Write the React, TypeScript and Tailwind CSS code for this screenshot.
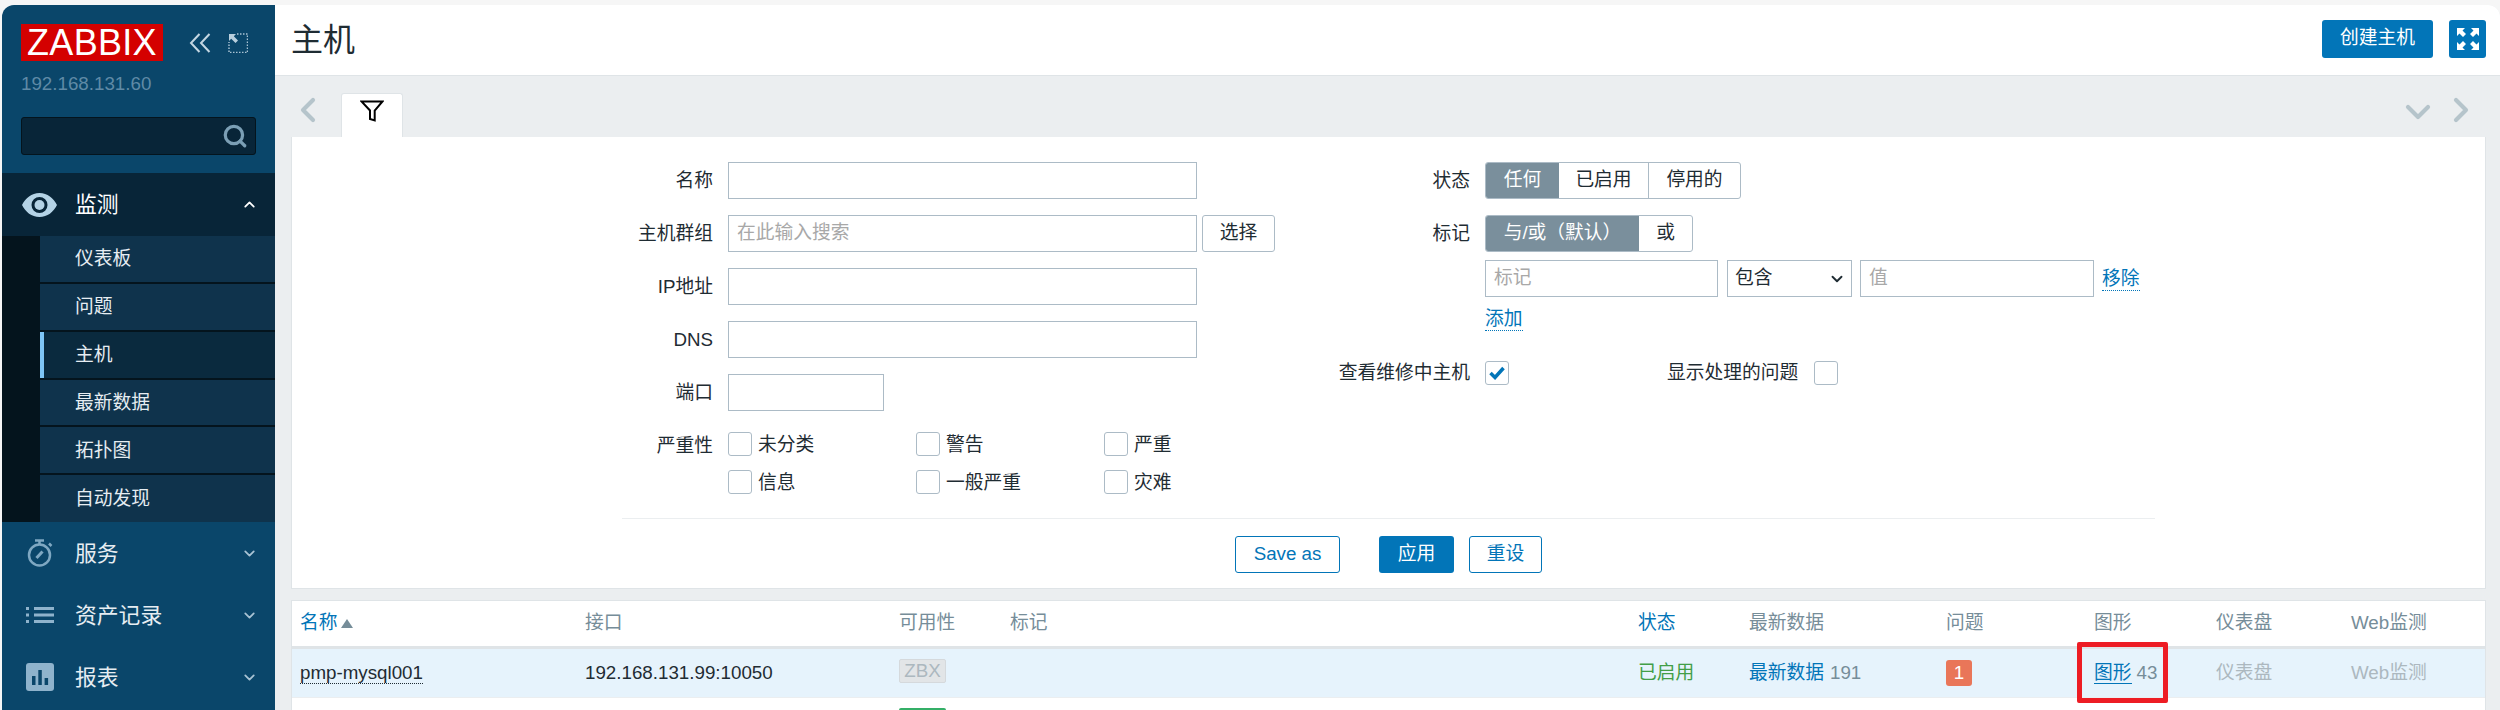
import React from 'react';
import { ChevronDown, ChevronLeft, ChevronRight, ChevronUp, Search } from 'lucide-react';

const subItems = ['仪表板', '问题', '主机', '最新数据', '拓扑图', '自动发现'];

const EyeIcon = () => (
  <svg width="35" height="24" viewBox="0 0 35 24" className="shrink-0">
    <path fill="#b4d3e6" fillRule="evenodd" d="M17.5 0C9.5 0 3.5 5 0 12c3.500 7 9.500 12 17.500 12S31.500 19 35 12C31.500 5 25.500 0 17.500 0zm0 4a8 8 0 1 1 0 16 8 8 0 0 1 0-16z" />
    <circle cx="17.500" cy="12" r="5" fill="#b4d3e6" />
  </svg>
);

const TimerIcon = () => (
  <svg width="26" height="28" viewBox="0 0 26 28" fill="none" stroke="#7fa8c2" strokeWidth="2.500">
    <circle cx="12.500" cy="16" r="10.500" />
    <path d="M8 1.500h9M12.500 2v3M22 4.500l2.500 2.500" />
    <path d="M9.500 19l6-6.500" strokeWidth="3" />
  </svg>
);

const ListIcon = () => (
  <svg width="28" height="16" viewBox="0 0 28 16" fill="#8fb3cc">
    <rect x="0" y="0" width="3" height="3" />
    <rect x="0" y="6.500" width="3" height="3" />
    <rect x="0" y="13" width="3" height="3" />
    <rect x="8" y="0" width="20" height="3" />
    <rect x="8" y="6.500" width="20" height="3" />
    <rect x="8" y="13" width="20" height="3" />
  </svg>
);

const ReportIcon = () => (
  <svg width="28" height="28" viewBox="0 0 28 28">
    <rect width="28" height="28" rx="3" fill="#8fb3cc" />
    <rect x="6" y="13" width="3.500" height="9" fill="#0a466a" />
    <rect x="12.300" y="7" width="3.500" height="15" fill="#0a466a" />
    <rect x="18.600" y="15" width="3.500" height="7" fill="#0a466a" />
  </svg>
);

const CollapseIcon = () => (
  <svg width="22" height="20" viewBox="0 0 22 20" fill="none" stroke="#c3d6e2" strokeWidth="2" className="shrink-0">
    <path d="M10.500 1L2 10l8.500 9M20.500 1L12 10l8.500 9" />
  </svg>
);

const ExpandSidebarIcon = () => (
  <svg width="20" height="20" viewBox="0 0 20 20" fill="none" className="shrink-0">
    <path d="M9 1h10.500v18.500H1V9" stroke="#a9c3d4" strokeWidth="1.500" strokeDasharray="1.500 1.500" />
    <path d="M1 1h7L5.800 3.200 10 7.500 7.500 10 3.200 5.800 1 8z" fill="#b8cfdd" />
  </svg>
);

const FilterIcon = () => (
  <svg width="24" height="22" viewBox="0 0 24 22" fill="none" stroke="#000" strokeWidth="2">
    <path d="M1.500 1.500h21l-7.800 9v10l-4.700-1.500v-8.500z" />
  </svg>
);

const FullscreenIcon = () => (
  <svg width="22" height="22" viewBox="0 0 22 22" fill="#ffffff">
    <path d="M0 0h8L5.500 2.500 9 6 6 9 2.500 5.500 0 8zM22 0v8l-2.500-2.500L16 9l-3-3 3.500-3.500L14 0zM0 22v-8l2.500 2.500L6 13l3 3-3.500 3.500L8 22zM22 22h-8l2.500-2.500L13 16l3-3 3.500 3.500L22 14z" />
  </svg>
);

const Checkbox = ({ checked = false }: { checked?: boolean }) => (
  <span className="flex h-6 w-6 shrink-0 items-center justify-center rounded-[3px] border border-[#acbbc6] bg-white">
    {checked && (
      <svg width="16" height="14" viewBox="0 0 16 14" fill="none" stroke="#0275b8" strokeWidth="3.500">
        <path d="M1.500 7l4.500 4.500L14.500 2" />
      </svg>
    )}
  </span>
);

const FormRow = ({ label, children, className = '' }: { label: string; children: React.ReactNode; className?: string }) => (
  <div className={`flex items-center ${className}`}>
    <div className="w-[120px] shrink-0 pt-[2px] text-right">{label}</div>
    <div className="ml-[15px] flex items-center">{children}</div>
  </div>
);

const TextBox = ({ width, placeholder }: { width: string; placeholder?: string }) => (
  <div className={`${width} flex h-[37px] items-center border border-[#acbbc6] bg-white px-[8px] text-[#a8a8a8]`}>{placeholder}</div>
);

const SeverityItem = ({ label }: { label: string }) => (
  <div className="flex h-[24px] w-[188px] items-center gap-[6px]">
    <Checkbox />
    <span className="pt-[2px]">{label}</span>
  </div>
);

const NavRow = ({ icon, label }: { icon: React.ReactNode; label: string }) => (
  <div className="flex h-[62px] items-center text-[21.800px] text-[#e6edf2]">
    <div className="flex w-[73px] shrink-0 justify-center pl-[3px]">{icon}</div>
    <span className="flex-1 pt-[2px]">{label}</span>
    <ChevronDown size={17} strokeWidth={2.500} className="mr-[17px] text-[#a9c3d4]" />
  </div>
);

const tableCols = 'grid grid-cols-[285px_314px_111px_628px_111px_197px_148px_122px_135px_1fr] pl-[8px]';

export default function App() {
  return (
    <div className="h-[710px] w-[2500px] overflow-hidden bg-[#f6f6f6] pl-[2px] pt-[5px] font-['Liberation_Sans','Noto_Sans_CJK_SC',sans-serif] text-[18.750px] text-[#1f2c33]">
      <div className="flex h-[705px] overflow-hidden rounded-t-[12px]">
        {/* sidebar */}
        <aside className="flex w-[273px] shrink-0 flex-col bg-[#0a466a]">
          <div className="flex h-[112px] flex-col px-[19px] pt-[19px]">
            <div className="flex items-center">
              <div className="flex h-[37px] w-[142px] items-center justify-center bg-[#d40000] text-[36px] leading-none tracking-[0.3px] text-white">ZABBIX</div>
              <div className="ml-[26px]"><CollapseIcon /></div>
              <div className="ml-[17px]"><ExpandSidebarIcon /></div>
            </div>
            <div className="mt-[9px] text-[#5f8aa6]">192.168.131.60</div>
          </div>
          <div className="mx-[19px] flex h-[38px] items-center justify-end rounded-[3px] border border-[#04141d] bg-[#082538] pr-[7px]">
            <Search size={26} strokeWidth={3} className="text-[#7b9fb5]" />
          </div>
          <div className="relative mt-[18px] bg-[#082538] pt-[63px]">
            <div className="absolute inset-x-0 top-0 flex h-[63px] items-center text-[21.800px] text-white">
              <div className="ml-[20px] w-[53px] shrink-0"><EyeIcon /></div>
              <span className="flex-1 pt-[2px]">监测</span>
              <ChevronUp size={17} strokeWidth={2.500} className="mr-[17px] text-white" />
            </div>
            <div className="border-l-[38px] border-[#04141d]">
              {subItems.map((item, i) => (
                <div
                  key={item}
                  className={`relative flex items-center border-b-2 pl-[35px] text-[#e6edf2] ${
                    i === 3 || i === 5 ? 'h-[47px]' : 'h-[48px]'
                  } ${i === 5 ? 'border-transparent pt-[3px]' : 'border-[#04141d]'} ${i === 3 || i === 4 ? 'pt-[2px]' : ''} ${
                    i === 2 ? 'bg-[#0a2a3e]' : 'bg-[#0f334c]'
                  }`}
                >
                  {i === 2 && <span className="absolute inset-y-0 left-0 w-[4px] bg-[#7ec5f5]" />}
                  {item}
                </div>
              ))}
            </div>
          </div>
          <NavRow icon={<TimerIcon />} label="服务" />
          <NavRow icon={<ListIcon />} label="资产记录" />
          <NavRow icon={<ReportIcon />} label="报表" />
        </aside>

        {/* main */}
        <main className="flex min-w-0 flex-1 flex-col bg-[#ebeef0]">
          <header className="flex h-[71px] shrink-0 items-center justify-between border-b border-[#dfe4e7] bg-white pl-[16px] pr-[14px]">
            <h1 className="text-[32px] font-normal leading-none text-[#1f2c33]">主机</h1>
            <div className="flex items-center gap-[16px] pb-[3px]">
              <button className="h-[38px] w-[111px] rounded-[3px] bg-[#0275b8] text-white">创建主机</button>
              <button className="flex h-[38px] w-[37px] items-center justify-center rounded-[3px] bg-[#0275b8]"><FullscreenIcon /></button>
            </div>
          </header>

          <div className="pl-[16px] pr-[14px]">
            <div className="flex h-[61px] items-end">
              <div className="mb-[7px] flex w-[50px] justify-start">
                <ChevronLeft size={40} strokeWidth={2.500} className="-ml-[3px] text-[#b5c4cb]" />
              </div>
              <div className="flex h-[44px] w-[62px] justify-center rounded-t-[3px] border-x border-t border-[#dfe4e7] bg-white pt-[6px]">
                <FilterIcon />
              </div>
              <div className="mb-[7px] ml-auto mr-[5px] flex h-[40px] items-center gap-[3px]">
                <ChevronDown size={40} strokeWidth={2.500} className="mt-[4px] text-[#b5c4cb]" />
                <ChevronRight size={40} strokeWidth={2.500} className="text-[#b5c4cb]" />
              </div>
            </div>

            {/* filter */}
            <section className="h-[452px] border-x border-b border-[#dfe4e7] bg-white pt-[25px]">
              <div className="flex h-[356px] pl-[301px]">
                <div className="flex w-[727px] shrink-0 flex-col">
                  <FormRow label="名称"><TextBox width="w-[469px]" /></FormRow>
                  <FormRow label="主机群组" className="mt-[16px]">
                    <TextBox width="w-[469px]" placeholder="在此输入搜索" />
                    <button className="ml-[5px] h-[37px] w-[73px] rounded-[3px] border border-[#acbbc6] bg-white">选择</button>
                  </FormRow>
                  <FormRow label="IP地址" className="mt-[16px]"><TextBox width="w-[469px]" /></FormRow>
                  <FormRow label="DNS" className="mt-[16px]"><TextBox width="w-[469px]" /></FormRow>
                  <FormRow label="端口" className="mt-[16px]"><TextBox width="w-[156px]" /></FormRow>
                  <div className="mt-[21px] flex">
                    <div className="w-[120px] shrink-0 pt-[2px] text-right leading-[24px]">严重性</div>
                    <div className="ml-[15px] grid grid-cols-3 gap-y-[14px]">
                      <SeverityItem label="未分类" />
                      <SeverityItem label="警告" />
                      <SeverityItem label="严重" />
                      <SeverityItem label="信息" />
                      <SeverityItem label="一般严重" />
                      <SeverityItem label="灾难" />
                    </div>
                  </div>
                </div>

                <div className="flex flex-col">
                  <div className="flex items-center">
                    <div className="w-[150px] shrink-0 pt-[2px] text-right">状态</div>
                    <div className="ml-[15px] flex h-[37px] overflow-hidden rounded-[3px] border border-[#acbbc6]">
                      <div className="flex w-[73px] items-center justify-center bg-[#7a8f9c] text-white">任何</div>
                      <div className="flex w-[90px] items-center justify-center border-r border-[#acbbc6]">已启用</div>
                      <div className="flex w-[91px] items-center justify-center">停用的</div>
                    </div>
                  </div>
                  <div className="mt-[16px] flex items-center">
                    <div className="w-[150px] shrink-0 pt-[2px] text-right">标记</div>
                    <div className="ml-[15px] flex h-[37px] overflow-hidden rounded-[3px] border border-[#acbbc6]">
                      <div className="flex w-[153px] items-center justify-center bg-[#7a8f9c] text-white">与/或（默认）</div>
                      <div className="flex w-[53px] items-center justify-center">或</div>
                    </div>
                  </div>
                  <div className="ml-[165px] mt-[8px] flex h-[37px] items-center">
                    <TextBox width="w-[233px]" placeholder="标记" />
                    <div className="ml-[9px] flex h-[37px] w-[125px] items-center justify-between border border-[#acbbc6] pl-[7px] pr-[5px]">
                      包含
                      <ChevronDown size={18} strokeWidth={2.500} />
                    </div>
                    <div className="ml-[8px]"><TextBox width="w-[234px]" placeholder="值" /></div>
                    <a className="ml-[8px] border-b border-dotted border-[#0275b8] leading-[23px] text-[#0275b8]">移除</a>
                  </div>
                  <div className="ml-[165px] mt-[10px] flex">
                    <a className="border-b border-dotted border-[#0275b8] leading-[23px] text-[#0275b8]">添加</a>
                  </div>
                  <div className="mt-[28px] flex items-center">
                    <div className="w-[150px] shrink-0 text-right">查看维修中主机</div>
                    <div className="ml-[15px]"><Checkbox checked /></div>
                    <div className="ml-[158px]">显示处理的问题</div>
                    <div className="ml-[16px]"><Checkbox /></div>
                  </div>
                </div>
              </div>
              <div className="ml-[330px] mr-[330px] flex justify-center border-t border-[#ebeef0] pt-[17px]">
                <button className="h-[37px] w-[105px] rounded-[3px] border border-[#0275b8] bg-white text-[#0275b8]">Save as</button>
                <button className="ml-[39px] h-[37px] w-[75px] rounded-[3px] bg-[#0275b8] text-white">应用</button>
                <button className="ml-[15px] h-[37px] w-[73px] rounded-[3px] border border-[#0275b8] bg-white text-[#0275b8]">重设</button>
              </div>
            </section>

            {/* hosts table */}
            <section className="relative mt-[11px] border-x border-t border-[#dfe4e7] bg-white">
              <div className={`${tableCols} h-[48px] items-center border-b-[3px] border-[#dfe4e7] text-[#768d99]`}>
                <div className="flex items-center gap-[3px] text-[#0275b8]">
                  名称
                  <span className="h-0 w-0 border-x-[6px] border-b-[9px] border-x-transparent border-b-[#768d99]" />
                </div>
                <div>接口</div>
                <div>可用性</div>
                <div>标记</div>
                <div className="text-[#0275b8]">状态</div>
                <div>最新数据</div>
                <div>问题</div>
                <div>图形</div>
                <div>仪表盘</div>
                <div>Web监测</div>
              </div>
              <div className={`${tableCols} h-[49px] items-center border-b border-[#ebeef0] bg-[#e6f3fc]`}>
                <div><a className="border-b border-dotted border-[#1f2c33]">pmp-mysql001</a></div>
                <div>192.168.131.99:10050</div>
                <div>
                  <span className="mb-[4px] flex h-[24px] w-[47px] items-center justify-center rounded-[2px] border border-[#d5d9dc] bg-[#e2e5e7] text-[#acb8bf]">ZBX</span>
                </div>
                <div />
                <div className="text-[#429e47]">已启用</div>
                <div>
                  <a className="text-[#0275b8]">最新数据</a>
                  <span className="ml-[6px] text-[#768d99]">191</span>
                </div>
                <div>
                  <span className="flex h-[26px] w-[26px] items-center justify-center rounded-[3px] bg-[#e97659] text-white">1</span>
                </div>
                <div>
                  <a className="border-b border-[#0275b8] text-[#0275b8]">图形</a>
                  <span className="ml-[5px] text-[#768d99]">43</span>
                </div>
                <div className="text-[#acb8bf]">仪表盘</div>
                <div className="text-[#acb8bf]">Web监测</div>
              </div>
              <div className={`${tableCols} h-[60px] bg-white pt-[10px]`}>
                <div />
                <div />
                <div><span className="block h-[24px] w-[47px] rounded-[2px] bg-[#34af67]" /></div>
              </div>
              <div className="absolute left-[1785px] top-[41px] h-[61px] w-[91px] rounded-[2px] border-[5px] border-[#ed1c24]" />
            </section>
          </div>
        </main>
      </div>
    </div>
  );
}
